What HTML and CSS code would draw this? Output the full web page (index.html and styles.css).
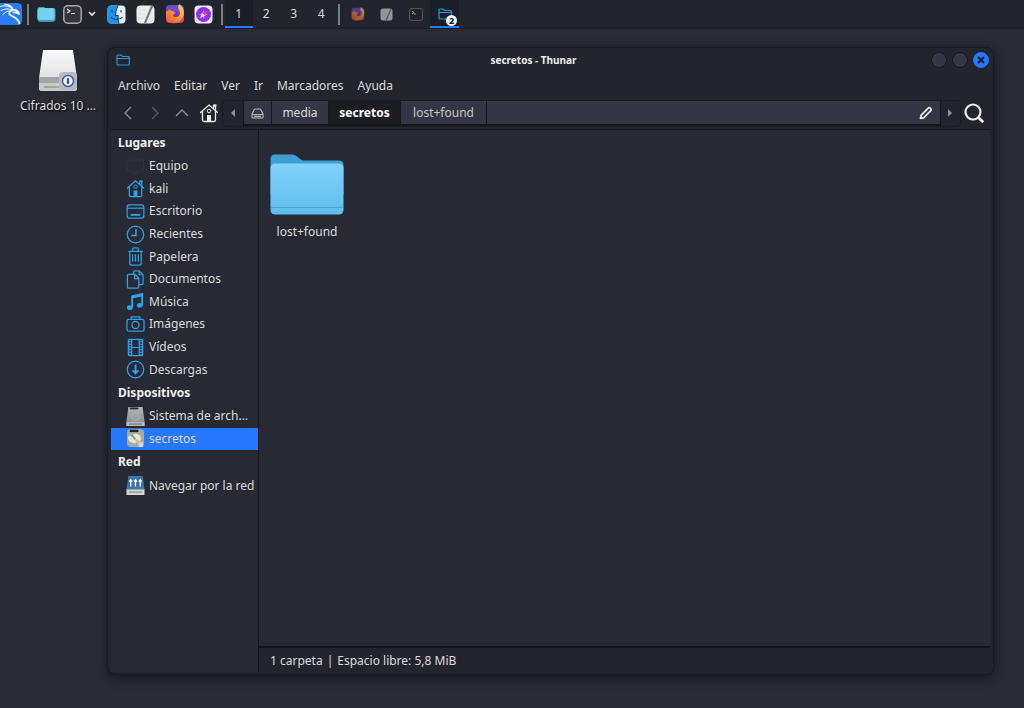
FILE: index.html
```html
<!DOCTYPE html>
<html lang="es">
<head>
<meta charset="utf-8">
<title>secretos - Thunar</title>
<link rel="stylesheet" href="styles.css">
</head>
<body>
<svg class="defs" aria-hidden="true">
  <defs>
    <linearGradient id="g-fox" x1="0" y1="0" x2="0" y2="1"><stop offset="0" stop-color="#5a4fd8"/><stop offset=".45" stop-color="#9a3fc0"/><stop offset="1" stop-color="#f0453c"/></linearGradient>
    <linearGradient id="g-flame" x1="1" y1="0" x2="0" y2="1"><stop offset="0" stop-color="#ffe04a"/><stop offset=".5" stop-color="#ff9a2e"/><stop offset="1" stop-color="#ff4a3c"/></linearGradient>
    <linearGradient id="g-folder" x1="0" y1="0" x2="0" y2="1"><stop offset="0" stop-color="#82d3fb"/><stop offset="1" stop-color="#5dbcec"/></linearGradient>
    <linearGradient id="g-drive" x1="0" y1="0" x2="0" y2="1"><stop offset="0" stop-color="#fafafa"/><stop offset="1" stop-color="#d6d6d6"/></linearGradient>
    <linearGradient id="g-metal" x1="0" y1="0" x2="0" y2="1"><stop offset="0" stop-color="#b4b8b8"/><stop offset="1" stop-color="#858a8a"/></linearGradient>
    <symbol id="firefox" viewBox="0 0 20 20">
      <rect x="1" y="1" width="18" height="18" rx="4" fill="url(#g-fox)"/>
      <path d="M1 7c2 1 3-1 4-2 0 2 1 2 3 2 2 0 3 1 3 2l-3 2c1 3 6 3 7-1 .5-3-1-4-2-6 0-2 1-3 1-4 5 3 6 9 4 13-2 5-7 7-12 6-3-1-5-3-5-6z" fill="url(#g-flame)"/>
      <circle cx="10.500" cy="10" r="3" fill="#6a3bc6"/>
      <path d="M4 8c3-1 6 0 7 1-2 1-3 1-3 3-2 0-3-2-4-4z" fill="#ff8b2c"/>
    </symbol>
    <symbol id="home" viewBox="0 0 20 20">
      <path d="M1.500 9.500 10 2l8.500 7.500M3.500 8v9q0 1.500 1.500 1.500h10q1.500 0 1.500-1.500V8M14.500 5.500v-3h2v5" fill="none" stroke="currentColor" stroke-width="1.300" stroke-linecap="round"/>
      <path d="M8 12h4v6.500H8zM14.500 1.500h3v2h-3z" fill="currentColor" stroke="none"/><circle cx="10" cy="8" r="1.800" fill="none" stroke="currentColor" stroke-width="1"/>
    </symbol>
    <symbol id="folder-line" viewBox="0 0 14 12">
      <path d="M1 10V1.800Q1 1 1.800 1H5l1.500 1.500h6q.8 0 .8.800V10q0 1-.8 1H1.800Q1 11 1 10zM1 4.500h12" fill="none" stroke="currentColor" stroke-width="1.200"/>
    </symbol>
  </defs>
</svg>

<header class="panel">
  <button class="kali" aria-label="Menú de aplicaciones">
    <svg width="22" height="26" viewBox="0 0 22 26"><path d="M0 2h17q5 0 5 5v12q0 5-5 5H0z" fill="#2a7ef5"/><path d="M0 5.500C5 4 10 5 13 8.500M1 9.500c4-2 8-2 11-.5M3 13.500c2-2.500 4-3.500 7-3.500" fill="none" stroke="#fff" stroke-width="1" stroke-linecap="round"/><path d="M5 3.500c4 0 7 2 8 5.500 3-.5 5 1 6.500 4.500-2-2-4-2.500-6-2" fill="none" stroke="#fff" stroke-width="1.600" stroke-linecap="round"/><path d="M12.500 9.500c-3.500.5-4.500 3.500-1.500 5 4 1.500 7 3 8.500 8" fill="none" stroke="#fff" stroke-width="1.600" stroke-linecap="round"/></svg>
  </button>
  <span class="sep sep-wide"></span>
  <button class="place" aria-label="Archivos"><svg width="19" height="17" viewBox="0 0 19 17"><path d="M.5 3Q.5 1 2.500 1H7l1.500 1H16q2.500 0 2.500 2v9q0 3-3 3h-12q-3 0-3-3z" fill="#3d9ab5"/><rect x=".5" y="2" width="17" height="12" rx="2" fill="#75d1ef"/></svg></button>
  <button class="term" aria-label="Terminal"><svg width="19" height="19" viewBox="0 0 19 19"><rect x=".8" y=".8" width="17.400" height="17.400" rx="4" fill="#35333b" stroke="#a9a9ab" stroke-width="1.500"/><path d="m4 4 3 2-3 2M8 8.500h4" fill="none" stroke="#e2e2e2" stroke-width="1.200"/></svg></button>
  <button class="more" aria-label="Más terminales"><svg width="8" height="6" viewBox="0 0 8 6"><path d="m1 1 3 3 3-3" fill="none" stroke="#eee" stroke-width="1.600"/></svg></button>
  <nav class="launchers" aria-label="Lanzadores">
    <button aria-label="Gestor de archivos"><svg width="19" height="19" viewBox="0 0 19 19"><rect x=".5" y=".5" width="18" height="18" rx="4" fill="#e8f1f8"/><path d="M4.500.5H11C9 4 8.500 7 8.500 10.500H11c0 3 0 5 1 8H4.500q-4 0-4-4v-10q0-4 4-4z" fill="#1b93f2"/><path d="M5 5v2.500M14 5v2.500M3.500 12c3 3.500 9 3.500 12 0M11 .5C9 4 8.500 7 8.500 10.500H11c0 3 0 5 1 8" fill="none" stroke="#17436f" stroke-width="1.100"/></svg></button>
    <button aria-label="Editor de texto"><svg width="19" height="19" viewBox="0 0 19 19"><rect x=".5" y=".5" width="18" height="18" rx="4" fill="#ececec"/><path d="M16 1 9 18" stroke="#76777a" stroke-width="2"/><path d="M3 5h8M3 9h7M3 13h5" stroke="#e2e2e2"/></svg></button>
    <button aria-label="Firefox"><svg width="20" height="20"><use href="#firefox"/></svg></button>
    <button aria-label="Navegador"><svg width="19" height="19" viewBox="0 0 19 19"><rect x=".5" y=".5" width="18" height="18" rx="4" fill="#eee9f4"/><circle cx="9.500" cy="9.500" r="7.500" fill="#8f2df0"/><path d="m9.500 5 1.200 3.300L14 9.500l-3.300 1.200L9.500 14l-1.200-3.300L5 9.500l3.300-1.200z" fill="#c79af6"/><path d="m13.500 5.500-2.500 5-2.500-2.500z" fill="#f0385f"/><path d="m5.500 13.500 3-5.500 2.500 2.500z" fill="#f1e8fb"/></svg></button>
  </nav>
  <span class="sep"></span>
  <nav class="spaces" aria-label="Espacios de trabajo"><button class="on">1</button><button>2</button><button>3</button><button>4</button></nav>
  <span class="sep"></span>
  <nav class="tasks" aria-label="Ventanas">
    <button class="dim" aria-label="Firefox"><svg width="14" height="14"><use href="#firefox"/></svg></button>
    <button aria-label="Editor"><svg width="13" height="13" viewBox="0 0 13 13"><rect x=".5" y=".5" width="12" height="12" rx="2.500" fill="#949599"/><path d="M11 1 6 12.500" stroke="#5b5c60" stroke-width="1.300"/></svg></button>
    <button aria-label="Terminal"><svg width="14" height="13" viewBox="0 0 14 13"><rect x=".6" y=".6" width="12.800" height="11.800" rx="1.500" fill="#202127" stroke="#55565b"/><path d="m3 3 2 1.500L3 6M5 6h2" fill="none" stroke="#999"/></svg></button>
    <button class="on" aria-label="Thunar, 2 ventanas"><svg class="blue" width="14" height="12"><use href="#folder-line"/></svg><span class="badge">2</span></button>
  </nav>
</header>

<main class="desktop">
  <figure class="drive">
    <svg width="40" height="44" viewBox="0 0 40 44">
      <path d="M5 1h30l4 28v10q0 3-3 3H4q-3 0-3-3V29z" fill="url(#g-drive)"/>
      <path d="M1 28h38v6H1z" fill="#a5a5a5"/><path d="M1 34h38v5q0 3-3 3H4q-3 0-3-3z" fill="#c9c9c9"/><path d="M6 38h17" stroke="#7f7f7f"/>
      <rect x="21" y="23" width="18" height="18" rx="4" fill="#b6bbc1"/><circle cx="30" cy="32" r="5.500" fill="#f1f4f8" stroke="#2f65b5" stroke-width="1.500"/><rect x="28.800" y="29" width="2.400" height="6" rx="1" fill="#4a5568"/>
    </svg>
    <figcaption>Cifrados 10 …</figcaption>
  </figure>

  <section class="window">
    <div class="titlebar">
      <svg class="blue" width="14" height="12"><use href="#folder-line"/></svg>
      <h1>secretos - Thunar</h1>
      <div class="controls">
        <button aria-label="Minimizar"></button><button aria-label="Maximizar"></button>
        <button class="close" aria-label="Cerrar"><svg width="8" height="8" viewBox="0 0 8 8"><path d="m1 1 6 6M7 1 1 7" stroke="#10203c" stroke-width="2"/></svg></button>
      </div>
    </div>
    <nav class="menubar"><button>Archivo</button><button>Editar</button><button>Ver</button><button>Ir</button><button>Marcadores</button><button>Ayuda</button></nav>
    <div class="toolbar">
      <button class="nav" aria-label="Atrás"><svg width="10" height="14" viewBox="0 0 10 14"><path d="M8 1 2 7l6 6" fill="none" stroke="#8d8f95" stroke-width="1.300"/></svg></button>
      <button class="nav" aria-label="Adelante"><svg width="10" height="14" viewBox="0 0 10 14"><path d="m2 1 6 6-6 6" fill="none" stroke="#5b5d65" stroke-width="1.300"/></svg></button>
      <button class="nav" aria-label="Subir"><svg width="14" height="10" viewBox="0 0 14 10"><path d="m1 8 6-6 6 6" fill="none" stroke="#8d8f95" stroke-width="1.300"/></svg></button>
      <button class="nav light" aria-label="Inicio"><svg width="20" height="20"><use href="#home"/></svg></button>
      <div class="pathbar">
        <button class="edge" aria-label="Desplazar a la izquierda"><svg width="4" height="8" viewBox="0 0 4 8"><path d="M4 0v8L0 4z" fill="#8d8f95"/></svg></button>
        <button class="crumb disk" aria-label="Sistema de archivos"><svg width="13" height="11" viewBox="0 0 13 11"><path d="m1 6 2-4q.5-1 1.500-1h4q1 0 1.500 1l2 4v3q0 1-1 1H2q-1 0-1-1zM1 6.500h11M3 8.400h7" fill="none" stroke="#b5b6ba" stroke-width="1.100"/></svg></button>
        <button class="crumb media">media</button>
        <button class="crumb current">secretos</button>
        <button class="crumb last">lost+found</button>
        <button class="crumb edit" aria-label="Editar ruta"><svg width="14" height="14" viewBox="0 0 14 14"><path d="M1.500 12.500 2 9.300 9 2.300q1.300-1.300 2.600 0t0 2.600l-7 7z" fill="none" stroke="#e8e8e8" stroke-width="1.700" stroke-linejoin="round"/><path d="M1.500 12.500 2 9.500l2.500 2.500z" fill="#e8e8e8"/></svg></button>
        <button class="edge right" aria-label="Desplazar a la derecha"><svg width="5" height="8" viewBox="0 0 5 8"><path d="M0 0v8l4-4z" fill="#8d8f95"/></svg></button>
      </div>
      <button class="search" aria-label="Buscar"><svg width="20" height="20" viewBox="0 0 20 20"><circle cx="9" cy="9" r="7.500" fill="none" stroke="#eee" stroke-width="2.200"/><path d="m14 14 5.200 5.200" stroke="#eee" stroke-width="2.800"/></svg></button>
    </div>
    <div class="body">
      <aside class="sidebar">
        <h2>Lugares</h2>
        <ul class="places">
          <li><a href="#"><svg class="faint" viewBox="0 0 20 20"><rect x="1.500" y="3" width="17" height="12" rx="2"/><path d="M6 17.500h8"/></svg>Equipo</a></li>
          <li><a href="#"><svg viewBox="0 0 20 20"><use href="#home"/></svg>kali</a></li>
          <li><a href="#"><svg viewBox="0 0 20 20"><rect x="1.200" y="3" width="17.600" height="14" rx="2.500"/><path d="M1 6.500h18"/><path d="M5 13.500h10" stroke-width="2"/></svg>Escritorio</a></li>
          <li><a href="#"><svg viewBox="0 0 20 20"><circle cx="10" cy="10" r="8.700"/><path d="M10.500 4.500V11H5.500" stroke-width="1.700"/></svg>Recientes</a></li>
          <li><a href="#"><svg viewBox="0 0 20 20"><path d="M2.500 4.500h15M4 5v12q0 2 2 2h8q2 0 2-2V5M7 4V2.500Q7 1 8.500 1h3Q13 1 13 2.500V4M7 7.500v8M10 7.500v8M13 7.500v8"/></svg>Papelera</a></li>
          <li><a href="#"><svg viewBox="0 0 20 20"><path d="M8 4V2.500Q8 1 9.500 1H14l4 4v9q0 1.500-1.500 1.500H14M14 1v4h4M1.500 6q0-1.500 1.500-1.500h6.500l4 4V17q0 2-1.500 2H3q-1.500 0-1.500-1.500zM9 5v4h4.500"/></svg>Documentos</a></li>
          <li><a href="#"><svg viewBox="0 0 20 20"><path d="M6.500 16V4.500L17 2v12M6.500 6 17 3.500" stroke-width="2"/><ellipse cx="4" cy="16.500" rx="3" ry="2.500" fill="currentColor" stroke="none"/><ellipse cx="14.500" cy="14" rx="3" ry="2.500" fill="currentColor" stroke="none"/></svg>Música</a></li>
          <li><a href="#"><svg viewBox="0 0 20 20"><rect x="1" y="4.500" width="18" height="12.500" rx="2"/><circle cx="10" cy="10.500" r="3.700"/><path d="M5.500 4V2h9v2"/></svg>Imágenes</a></li>
          <li><a href="#"><svg viewBox="0 0 20 20"><rect x="2.500" y="1.500" width="15" height="17" rx="1"/><path d="M6 2v16M14 2v16M6 10h8"/><path d="M4 3v15M16 3v15" stroke-width="2" stroke-dasharray="1.500 1.300"/></svg>Vídeos</a></li>
          <li><a href="#"><svg viewBox="0 0 20 20"><circle cx="10" cy="10" r="8.700"/><path d="M10 5v9M7 11l3 3 3-3" stroke-width="2"/></svg>Descargas</a></li>
        </ul>
        <h2>Dispositivos</h2>
        <ul class="devices">
          <li><a href="#"><svg viewBox="0 0 20 20"><path d="M2.500 0h15L19.500 15v5H.5v-5z" fill="url(#g-metal)" stroke="none"/><path d="M4 1.500h9" stroke="#2b2d2e" stroke-width="2"/><circle cx="10" cy="10" r="4" stroke="#a9adad"/><path d="M.5 16h19v4H.5z" fill="#b9bcbc" stroke="none"/><path d="M3 18h14" stroke="#777"/></svg>Sistema de arch…</a></li>
          <li class="selected"><a href="#"><svg viewBox="0 0 20 20"><rect x="1" y="0" width="18" height="19" rx="4" fill="#a3aaa8" stroke="none"/><path d="M4 2h9" stroke="#222" stroke-width="2.500"/><ellipse cx="9" cy="10" rx="7" ry="5" fill="#e7e5d3" stroke="none"/><path d="m9 10-5-3 3-2z" fill="#5fae6c" stroke="none"/><path d="m9 10 6 3-4 2z" fill="#e2c05d" stroke="none"/><circle cx="9" cy="10" r="1.200" fill="#889" stroke="none"/><path d="M13 14h5v5h-5z" fill="#d6d8d8" stroke="none"/></svg>secretos</a></li>
        </ul>
        <h2>Red</h2>
        <ul class="network">
          <li><a href="#"><svg viewBox="0 0 20 20"><path d="M2.500 0h15L19.500 14H.5z" fill="#3e74a8" stroke="none"/><path d="M.5 14h19v6H.5z" fill="#d3d5d5" stroke="none"/><path d="M3 17h14" stroke="#8a8c8c"/><path d="M5 11V5M10 11V5M15 11V5M3.500 6 5 4l1.500 2M8.500 6 10 4l1.500 2M13.500 6 15 4l1.500 2" stroke="#fff" stroke-width="1.300"/></svg>Navegar por la red</a></li>
        </ul>
      </aside>
      <div class="content">
        <div class="files">
          <button class="file">
            <svg width="74" height="61" viewBox="0 0 74 61"><path d="M.5 5Q.5.500 5 .5h17q3 0 5 2l4 3q1 1 3 1h35q4.500 0 4.500 4.500V40H.5z" fill="#3f9dd5"/><rect x=".5" y="9.500" width="73" height="51" rx="4.500" fill="url(#g-folder)"/><path d="M1 53.500h72" stroke="#4ba6d6"/></svg>
            <span>lost+found</span>
          </button>
        </div>
        <footer class="status"><span>1 carpeta</span><span>|</span><span>Espacio libre: 5,8 MiB</span></footer>
      </div>
    </div>
  </section>
</main>
</body>
</html>
```
FILE: styles.css
```css
* { box-sizing: border-box; }
body {
  margin: 0;
  height: 100vh;
  display: flex;
  flex-direction: column;
  background: #282a34;
  color: #dadbdd;
  font: 12px/18px "Noto Sans", sans-serif;
  overflow: hidden;
}
button {
  display: flex;
  align-items: center;
  justify-content: center;
  padding: 0;
  border: 0;
  background: none;
  color: inherit;
  font: inherit;
}
svg { display: block; flex: none; }
ul { margin: 0; padding: 0; list-style: none; }
.defs { position: absolute; width: 0; height: 0; }
.blue { color: #2796dc; }

/* Top panel */
.panel {
  flex: none;
  display: flex;
  height: 29px;
  background: #23252e;
  border-bottom: 1px solid #1b1d24;
}
.kali { width: 22px; }
.sep { width: 8px; display: flex; justify-content: center; align-items: center; }
.sep::before { content: ""; width: 2px; height: 21px; background: #7d7e82; }
.sep-wide { width: 12px; }
.place { width: 25px; }
.term { width: 27px; }
.more { width: 12px; margin-right: 4px; }
.launchers, .tasks { display: flex; }
.launchers button, .tasks button { width: 29px; }
.launchers + .sep { width: 7px; }
.spaces { width: 110px; display: grid; grid-template-columns: repeat(4, 1fr); }
.panel .on { background: #1b1f28; box-shadow: inset 0 -2px #2777ff; }
.dim { opacity: .6; }
.tasks .on { position: relative; }
.badge {
  position: absolute;
  right: 2px;
  bottom: 2px;
  width: 11px;
  height: 11px;
  border-radius: 50%;
  background: #f2f2f2;
  color: #111;
  font-size: 9px;
  font-weight: 700;
  line-height: 11px;
  text-align: center;
}

/* Desktop */
.desktop { flex: 1; position: relative; }
.drive {
  position: absolute;
  left: 13px;
  top: 20px;
  width: 90px;
  margin: 0;
  display: flex;
  flex-direction: column;
  align-items: center;
  gap: 4px;
  white-space: nowrap;
  text-shadow: 1px 1px 2px #000;
}
.window {
  position: absolute;
  inset: 18px 30px 33px 108px;
  display: flex;
  flex-direction: column;
  padding: 0 3px 2px;
  border: 1px solid #191b21;
  border-width: 1px 1px 1px 0;
  border-radius: 7px;
  background: #23252e;
  box-shadow: -1px 0 #191b21, 0 3px 12px rgba(0, 0, 0, .4);
}
.titlebar {
  display: grid;
  grid-template-columns: 1fr auto 1fr;
  align-items: center;
  height: 24px;
  padding: 0 1px 0 5px;
}
.titlebar h1 { margin: 0 38px 0 0; font-size: 10px; line-height: 16px; color: #eee; }
.controls { display: flex; justify-content: flex-end; gap: 5px; }
.controls button {
  width: 16px;
  height: 16px;
  border: 1px solid #15171c;
  border-radius: 50%;
  background: #343743;
}
.controls .close { border-color: #2777ff; background: #2777ff; }
.menubar { display: flex; gap: 14px; height: 25px; padding: 2px 0 0 7px; }
.toolbar { display: flex; align-items: center; height: 33px; border-bottom: 1px solid #15171c; padding: 0 3px; }
.nav { width: 27px; height: 26px; }
.light { color: #eee; }
.pathbar {
  flex: 1;
  display: flex;
  height: 27px;
  border: 1px solid #1a1c22;
  border-radius: 4px;
}
.edge { width: 20px; }
.right { width: 19px; }
.crumb {
  padding-top: 2px;
  background: #343743;
  border-left: 1px solid #17191e;
  border-bottom: 2px solid #15171c;
}
.disk { width: 28px; }
.media { width: 57px; }
.current { width: 72px; background: #1b1d23; color: #fff; font-weight: 700; }
.last { width: 86px; color: #c3c4c8; }
.edit { flex: 1; justify-content: flex-end; padding-right: 7px; border-right: 1px solid #17191e; }
.search { width: 26px; }

/* Sidebar and folder view */
.body { flex: 1; display: grid; grid-template-columns: 148px 1fr; min-height: 0; }
.sidebar { padding-top: 1px; background: #272a34; border-right: 1px solid #15171c; }
.sidebar h2 { margin: 0; padding-left: 7px; font-size: 12px; line-height: 24px; color: #f0f0f0; }
.sidebar ul { display: grid; grid-auto-rows: 1fr; }
.places { height: 226px; }
.devices { height: 45px; }
.network { height: 23px; }
.sidebar a {
  display: flex;
  align-items: center;
  gap: 4px;
  height: 100%;
  padding-left: 15px;
  color: inherit;
  text-decoration: none;
  white-space: nowrap;
}
.sidebar svg { width: 19px; height: 19px; color: #2ba3ee; fill: none; stroke: currentColor; stroke-width: 1.3px; }
.sidebar .faint { color: #303238; }
.selected { background: #2777ff; }
.content { display: flex; flex-direction: column; min-width: 0; background: #272a34; }
.files { flex: 1; padding: 24px 11px; }
.file { flex-direction: column; gap: 8px; }
.status {
  display: flex;
  gap: 4px;
  padding: 4px 11px 2px;
  background: #23252e;
  border-top: 2px solid #121419;
}
```
